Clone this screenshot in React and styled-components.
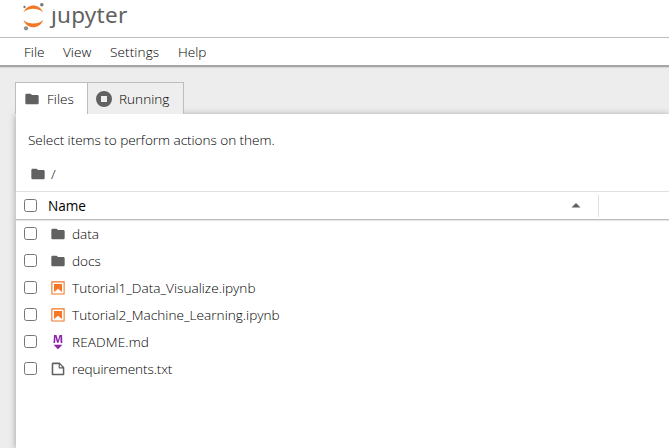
import React from "react";
import styled, { createGlobalStyle } from "styled-components";

const GlobalStyle = createGlobalStyle`
  * { box-sizing: border-box; }
  html, body { margin: 0; height: 100%; overflow: hidden; background: #ededed; }
  body { font: 13.6px/18px "Open Sans", "Noto Sans", sans-serif; color: #1f1f1f; }
  svg { display: block; flex: none; }
`;

const Page = styled.div`
  display: flex;
  flex-direction: column;
  width: 669px;
  height: 448px;
  overflow: hidden;
  background: #ededed;
`;

const Header = styled.header`
  display: flex;
  height: 38px;
  flex: none;
  padding-left: 22px;
  background: #fff;
  border-bottom: 1px solid #bdbdbd;
`;

const Wordmark = styled.div`
  margin: 0 0 0 6px;
  font: 400 22.5px/29px "Noto Sans", sans-serif;
  letter-spacing: ${(p) => p.$track}px;
  color: #616161;
`;

const DotlessJ = styled.span`
  display: inline-block;
  clip-path: inset(9.5px -4px -4px -4px);
`;

const MenuBar = styled.nav`
  display: flex;
  flex: none;
  gap: 18px;
  height: 29px;
  padding: 5px 0 0 24px;
  background: #fff;
  border-bottom: 2px solid #a6a6a6;
  box-shadow: 0 1px 1px #d8d8d8;
`;

const Label = styled.span`
  flex: none;
  width: ${(p) => (p.$w ? `${p.$w}px` : "auto")};
  letter-spacing: ${(p) => p.$track || 0}px;
  font-weight: ${(p) => (p.$strong ? 400 : 330)};
  color: #000;
  white-space: nowrap;
`;

const Tabs = styled.div`
  display: flex;
  flex: none;
  height: 32px;
  margin: 15px 0 0 15px;
  position: relative;
  z-index: 1;
`;

const Tab = styled.div`
  display: flex;
  align-items: center;
  width: ${(p) => p.$w}px;
  padding: 1px 0 0 ${(p) => p.$pad}px;
  gap: ${(p) => p.$gap}px;
  background: ${(p) => (p.$active ? "#fff" : "#eee")};
  border: 1px solid #bdbdbd;
  border-bottom: 0;
  & + & { border-left: 0; }
`;

const Panel = styled.main`
  flex: 1;
  margin-left: 16px;
  background: #fff;
  box-shadow: 0 1px 7px rgba(0, 0, 0, 0.34);
  clip-path: inset(-8px 0 0 -8px);
`;

const Hint = styled.div`
  height: 46px;
  padding: 17px 0 0 12px;
`;

const Crumbs = styled.div`
  display: flex;
  align-items: center;
  gap: 5px;
  height: 31px;
  padding: 0 0 3px 14px;
`;

const TableHead = styled.div`
  display: flex;
  align-items: center;
  height: 29px;
  padding-left: 8px;
  border-top: 1px solid #e0e0e0;
  border-bottom: 1px solid #bdbdbd;
  box-shadow: 0 1px 1px #e8e8e8;
`;

const SortArrow = styled.div`
  margin-left: auto;
  margin-right: 17px;
`;

const Divider = styled.div`
  width: 71px;
  height: 22px;
  border-left: 1px solid #e0e0e0;
`;

const Check = styled.input`
  flex: none;
  width: 13px;
  height: 13px;
  margin: 0;
  appearance: none;
  background: #fff;
  border: 1px solid #767676;
  border-radius: 2.5px;
`;

const Rows = styled.div`
  padding-top: 0;
`;

const Row = styled.div`
  display: flex;
  align-items: center;
  height: 27px;
  padding-left: 8px;
`;

const IconSlot = styled.div`
  display: flex;
  justify-content: center;
  width: 16px;
  margin: 0 6px 0 13px;
`;

const HeadName = styled.div`
  margin-left: 11px;
`;

const Logo = () => (
  <svg width="23" height="32" viewBox="0 0 23 32">
    <path d="M1.4 12.5C5.2 3.1 17.4 3.1 21.2 12.5C16.5 7.5 6.1 7.5 1.4 12.5Z" fill="#f37726" />
    <path d="M1.4 20C5.2 29.7 17.4 29.7 21.2 20C16.5 24.8 6.1 24.8 1.4 20Z" fill="#f37726" />
    <circle cx="19.8" cy="4.8" r="1.75" fill="#767677" />
    <circle cx="2.5" cy="7" r="1.15" fill="#767677" />
    <circle cx="4" cy="28.3" r="2.15" fill="#8e8e8e" />
  </svg>
);

const Folder = () => (
  <svg width="16" height="16" viewBox="0 0 24 24">
    <path fill="#616161" d="M10 4H4c-1.1 0-2 .9-2 2v12c0 1.1.9 2 2 2h16c1.1 0 2-.9 2-2V8c0-1.1-.9-2-2-2h-8l-2-2z" />
  </svg>
);

const Stop = () => (
  <svg width="16" height="16" viewBox="0 0 16 16">
    <path fill="#616161" fillRule="evenodd" d="M8 0a8 8 0 1 1 0 16A8 8 0 0 1 8 0ZM5 5v6h6V5Z" />
  </svg>
);

const Notebook = () => (
  <svg width="16" height="16" viewBox="0 0 22 22">
    <path fill="#F37726" d="M18.7 3.3v15.4H3.3V3.3h15.4m1.5-1.5H1.8v18.3h18.3l.1-18.3z" />
    <path fill="#F37726" d="M16.5 16.5l-5.4-4.3-5.6 4.3v-11h11z" />
  </svg>
);

const Markdown = () => (
  <svg width="16" height="16" viewBox="0 0 22 22">
    <path fill="#8E24AA" d="M5 14.9h12l-6.1 6zm9.4-6.8c0-1.3-.1-2.9-.1-4.5-.4 1.4-.9 2.9-1.3 4.3l-1.3 4.3h-2L8.5 7.9c-.4-1.3-.7-2.9-1-4.3-.1 1.6-.1 3.2-.2 4.6L7 12.4H4.8l.7-11h3.3L10 5c.4 1.2.7 2.7 1 3.9.3-1.2.7-2.6 1-3.9l1.2-3.7h3.3l.6 11h-2.4l-.3-4.2z" />
  </svg>
);

const File = () => (
  <svg width="16" height="16" viewBox="0 0 22 22">
    <path fill="#616161" d="M19.3 8.2l-5.5-5.5c-.3-.3-.7-.5-1.2-.5H3.9c-.8.1-1.6.9-1.6 1.8v14.1c0 .9.7 1.6 1.6 1.6h14.2c.9 0 1.6-.7 1.6-1.6V9.4c.1-.5-.1-.9-.4-1.2zm-5.8-3.3l3.4 3.6h-3.4V4.9zm3.9 12.7H4.7c-.1 0-.2 0-.2-.2V4.7c0-.2.1-.3.2-.3h7.2v4.4s0 .8.3 1.1c.3.3 1.1.3 1.1.3h4.3v7.2s-.1.2-.2.2z" />
  </svg>
);

const entries = [
  { name: "data", Icon: Folder, track: -0.05 },
  { name: "docs", Icon: Folder, track: 0 },
  { name: "Tutorial1_Data_Visualize.ipynb", Icon: Notebook, track: 0.02 },
  { name: "Tutorial2_Machine_Learning.ipynb", Icon: Notebook, track: 0.02 },
  { name: "README.md", Icon: Markdown, track: 0.12 },
  { name: "requirements.txt", Icon: File, track: -0.12 },
];

export default function App() {
  return (
    <Page>
      <GlobalStyle />
      <Header>
        <Logo />
        <Wordmark $track={0.25}><DotlessJ>j</DotlessJ>upyter</Wordmark>
      </Header>
      <MenuBar>
        <Label $w={21}>File</Label>
        <Label $w={29}>View</Label>
        <Label $w={50} $track={0.1}>Settings</Label>
        <Label>Help</Label>
      </MenuBar>
      <Tabs>
        <Tab $active $w={73} $pad={8} $gap={7}><Folder /><Label>Files</Label></Tab>
        <Tab $w={96} $pad={8} $gap={7}><Stop /><Label>Running</Label></Tab>
      </Tabs>
      <Panel>
        <Hint><Label $track={-0.05}>Select items to perform actions on them.</Label></Hint>
        <Crumbs><Folder /><Label>/</Label></Crumbs>
        <TableHead>
          <Check type="checkbox" aria-label="Select all" />
          <HeadName><Label $strong>Name</Label></HeadName>
          <SortArrow>
            <svg width="10" height="5" viewBox="0 0 10 5"><path d="M0.5 4.5L5 0l4.5 4.5z" fill="#616161" /></svg>
          </SortArrow>
          <Divider />
        </TableHead>
        <Rows>
          {entries.map(({ name, Icon, track }) => (
            <Row key={name}>
              <Check type="checkbox" aria-label={name} />
              <IconSlot><Icon /></IconSlot>
              <Label $track={track}>{name}</Label>
            </Row>
          ))}
        </Rows>
      </Panel>
    </Page>
  );
}
